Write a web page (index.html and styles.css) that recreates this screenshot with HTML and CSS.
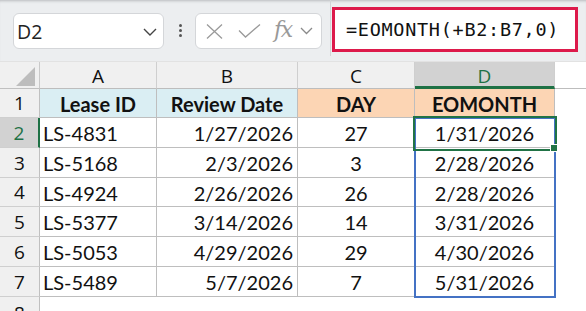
FILE: index.html
```html
<!DOCTYPE html>
<html>
<head>
<meta charset="utf-8">
<link rel="stylesheet" href="styles.css">
</head>
<body>
<div class="app">
  <div class="toolbar">
    <div class="namebox">
      <span class="nb-text">D2</span>
      <svg class="chev" width="14" height="8" viewBox="0 0 14 8"><path d="M1 1 L7 7 L13 1" fill="none" stroke="#444" stroke-width="1.4"/></svg>
    </div>
    <div class="dots"><i></i><i></i><i></i></div>
    <div class="fbtns">
      <svg class="ic-x" width="17" height="15" viewBox="0 0 17 15"><path d="M1 0.5 L16 14.5 M16 0.5 L1 14.5" fill="none" stroke="#9a9a9a" stroke-width="1.3"/></svg>
      <svg class="ic-ok" width="23" height="14" viewBox="0 0 23 14"><path d="M1 6.5 L7.5 13 L22 0.5" fill="none" stroke="#9a9a9a" stroke-width="1.3"/></svg>
      <span class="fx">fx</span>
      <svg class="chev2" width="13" height="8" viewBox="0 0 13 8"><path d="M1 1 L6.5 6.5 L12 1" fill="none" stroke="#8a8a8a" stroke-width="1.3"/></svg>
    </div>
    <div class="sep"></div>
    <div class="formula">=EOMONTH(+B2:B7,0)</div>
  </div>
  <div class="sheet">
    <div class="corner"><span class="tri"></span></div>
    <div class="colh">A</div>
    <div class="colh">B</div>
    <div class="colh">C</div>
    <div class="colh active">D</div>
    <div class="colh blank"></div>

    <div class="rowh">1</div>
    <div class="c hd blue">Lease ID</div>
    <div class="c hd blue">Review Date</div>
    <div class="c hd peach">DAY</div>
    <div class="c hd peach">EOMONTH</div>
    <div class="e"></div>

    <div class="rowh active">2</div>
    <div class="c l">LS-4831</div>
    <div class="c r">1/27/2026</div>
    <div class="c m">27</div>
    <div class="c m">1/31/2026</div>
    <div class="e"></div>

    <div class="rowh">3</div>
    <div class="c l">LS-5168</div>
    <div class="c r">2/3/2026</div>
    <div class="c m">3</div>
    <div class="c m">2/28/2026</div>
    <div class="e"></div>

    <div class="rowh">4</div>
    <div class="c l">LS-4924</div>
    <div class="c r">2/26/2026</div>
    <div class="c m">26</div>
    <div class="c m">2/28/2026</div>
    <div class="e"></div>

    <div class="rowh">5</div>
    <div class="c l">LS-5377</div>
    <div class="c r">3/14/2026</div>
    <div class="c m">14</div>
    <div class="c m">3/31/2026</div>
    <div class="e"></div>

    <div class="rowh">6</div>
    <div class="c l">LS-5053</div>
    <div class="c r">4/29/2026</div>
    <div class="c m">29</div>
    <div class="c m">4/30/2026</div>
    <div class="e"></div>

    <div class="rowh">7</div>
    <div class="c l">LS-5489</div>
    <div class="c r">5/7/2026</div>
    <div class="c m">7</div>
    <div class="c m">5/31/2026</div>
    <div class="e"></div>

    <div class="rowh last">8</div>
    <div class="e"></div>
    <div class="e"></div>
    <div class="e"></div>
    <div class="e"></div>
    <div class="e"></div>

    <div class="range"></div>
    <div class="sel"></div>
    <div class="handle"></div>
  </div>
</div>
</body>
</html>
```
FILE: styles.css
```css
* { box-sizing: border-box; }
html, body { margin: 0; padding: 0; background: #fff; }
.app { width: 586px; height: 311px; overflow: hidden; }

.toolbar {
  height: 62px;
  background: #eceef0;
  display: flex;
  align-items: flex-start;
  box-shadow: inset 0 3px 3px -2px #b8babd;
  border-bottom: 1px solid #e2e2e2;
}
.namebox {
  margin: 13px 0 0 13px;
  width: 151px; height: 36px;
  background: #fff;
  border: 1px solid #d4d6d9;
  border-radius: 6px;
  display: flex; align-items: center; justify-content: space-between;
  padding: 0 6px 0 3px;
}
.nb-text { font-family: "Open Sans", "Noto Sans", sans-serif; font-size: 19.5px; color: #222; }
.chev { margin-top: 2px; }
.dots { margin: 24px 0 0 15px; width: 4px; display: flex; flex-direction: column; gap: 2px; }
.dots i { display: block; width: 3px; height: 3px; border-radius: 50%; background: #555; }
.fbtns {
  margin: 13px 0 0 12px;
  width: 127px; height: 36px;
  background: #fff;
  border: 1px solid #d4d6d9;
  border-radius: 6px;
  display: flex; align-items: center;
  padding-left: 10px;
}
.ic-x { margin-right: 15px; }
.ic-ok { margin-right: 13px; }
.fx {
  font-family: "DejaVu Serif", "Liberation Serif", serif;
  font-style: italic; font-size: 22px; color: #999;
  letter-spacing: -1.5px; margin-right: 8px; margin-top: -3px;
}
.sep { margin-left: 8px; width: 1px; height: 56px; background: #d3d5d8; }
.formula {
  margin: 7px 0 0 1px;
  width: 246px; height: 45px;
  background: #fff;
  border: 3px solid #dd1a4b;
  font-family: "DejaVu Sans Mono", monospace;
  font-size: 18.5px; letter-spacing: 0.7px;
  color: #111;
  display: flex; align-items: center;
  padding: 0 0 1px 11px;
}

.sheet {
  position: relative;
  display: grid;
  grid-template-columns: 40px 117px 141px 117px 140px 1fr;
  grid-template-rows: 27px 29px 30px 30px 29px 30px 30px 30px 1fr;
  height: 249px;
  font-family: "Lato", "Noto Sans", sans-serif;
}
.corner { background: #f0f0f0; border-right: 1px solid #c9c9c9; border-bottom: 1px solid #c0c0c0; position: relative; }
.tri {
  position: absolute; left: 16px; top: 5px; width: 19px; height: 19px;
  background: #bdbdbd; clip-path: polygon(100% 0, 100% 100%, 0 100%);
}
.colh {
  background: #f0f0f0;
  border-right: 1px solid #cfcfcf; border-bottom: 1px solid #bdbdbd;
  display: flex; align-items: center; justify-content: center;
  font-family: "Open Sans", "Noto Sans", sans-serif; font-size: 19px; color: #111;
  padding-top: 1px;
}
.colh.active { background: #d2d2d2; color: #1e7145; border-bottom: 3px solid #1e7145; padding-top: 3px; }
.colh.blank { background: #fff; border-right: none; }
.rowh {
  background: #f0f0f0;
  border-right: 1px solid #c0c0c0; border-bottom: 1px solid #cfcfcf;
  display: flex; align-items: center; justify-content: center;
  font-family: "Open Sans", "Noto Sans", sans-serif; font-size: 19px; color: #111;
}
.rowh.active { background: #d2d2d2; color: #1e7145; border-right: 2px solid #1e7145; }
.rowh.last { align-items: flex-start; border-bottom: none; padding-top: 3px; }
.c {
  border-right: 1px solid #bebebe; border-bottom: 1px solid #bebebe;
  display: flex; align-items: center;
  font-size: 20px; color: #111; white-space: nowrap;
  padding-top: 1px;
}
.c.hd { font-weight: bold; justify-content: center; font-size: 20px; }
.c.blue { background: #daeef3; }
.c.peach { background: #fcd5b4; }
.c.l { padding-left: 3px; }
.c.r { justify-content: flex-end; padding-right: 4px; }
.c.m { justify-content: center; }
.e { background: #fff; }

.range {
  position: absolute; left: 414px; top: 55px; width: 142px; height: 181px;
  border: 2px solid #4472c4;
}
.sel {
  position: absolute; left: 413px; top: 54px; width: 144px; height: 35px;
  border: 2px solid #217346;
}
.handle {
  position: absolute; left: 550px; top: 82px; width: 8px; height: 8px;
  background: #217346; border: 1px solid #fff;
}
```
